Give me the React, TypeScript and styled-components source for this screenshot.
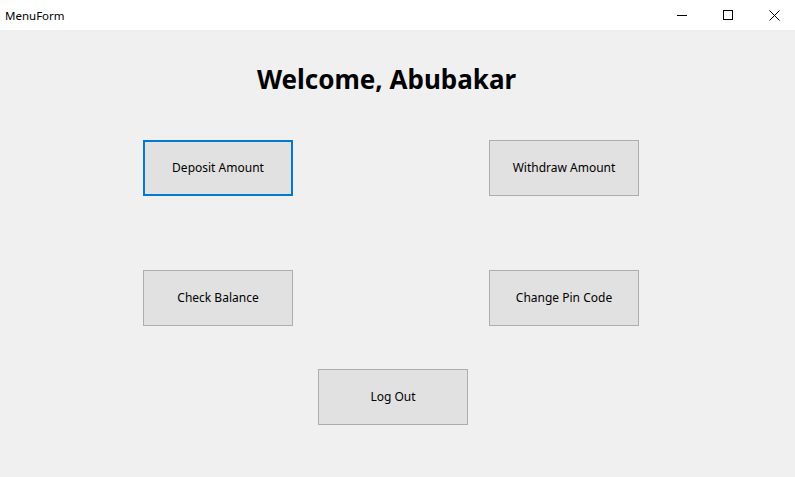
import React from "react";
import styled, { createGlobalStyle } from "styled-components";

const GlobalStyle = createGlobalStyle`
  html, body {
    margin: 0;
    padding: 0;
    background: #f0f0f0;
  }
  body {
    font-family: "Noto Sans", "Open Sans", sans-serif;
  }
`;

const Window = styled.div`
  width: 795px;
  height: 477px;
  display: flex;
  flex-direction: column;
  background: #f0f0f0;
  overflow: hidden;
`;

const TitleBar = styled.div`
  height: 30px;
  display: flex;
  align-items: center;
  background: #ffffff;
  flex-shrink: 0;
  margin-right: -2px;
`;

const Caption = styled.span`
  flex: 1;
  padding-left: 5px;
  font-size: 11.5px;
  color: #000;
`;

const CaptionButton = styled.div`
  width: 46px;
  height: 30px;
  display: flex;
  align-items: center;
  justify-content: center;
`;

const Body = styled.div`
  flex: 1;
  display: flex;
  flex-direction: column;
`;

const Heading = styled.h1`
  margin: 29px 0 0 0;
  font-size: 26px;
  font-weight: 700;
  line-height: 40px;
  text-align: center;
  padding-right: 22px;
  color: #000;
`;

const ButtonGrid = styled.div`
  display: grid;
  grid-template-columns: 150px 150px;
  column-gap: 196px;
  row-gap: 74px;
  padding-left: 143px;
  margin-top: 41px;
`;

const LastRow = styled.div`
  display: flex;
  padding-left: 318px;
  margin-top: 43px;
`;

const FormButton = styled.button<{ $focused?: boolean }>`
  width: 150px;
  height: 56px;
  box-sizing: border-box;
  background: #e1e1e1;
  border: ${(p) => (p.$focused ? "2px solid #0078d7" : "1px solid #adadad")};
  font-family: "Noto Sans", "Open Sans", sans-serif;
  font-size: 12px;
  color: #000;
  padding: 0 0 2px 0;
  cursor: pointer;
`;

export default function App() {
  return (
    <>
      <GlobalStyle />
      <Window>
        <TitleBar>
          <Caption>MenuForm</Caption>
          <CaptionButton>
            <svg width="10" height="10" viewBox="0 0 10 10">
              <line x1="0" y1="5.5" x2="10" y2="5.5" stroke="#000" strokeWidth="1" />
            </svg>
          </CaptionButton>
          <CaptionButton>
            <svg width="10" height="10" viewBox="0 0 10 10">
              <rect x="0.5" y="0.5" width="9" height="9" fill="none" stroke="#000" strokeWidth="1" />
            </svg>
          </CaptionButton>
          <CaptionButton>
            <svg width="11" height="11" viewBox="0 0 11 11">
              <path d="M0.5 0.5 L10.5 10.5 M10.5 0.5 L0.5 10.5" stroke="#000" strokeWidth="1" />
            </svg>
          </CaptionButton>
        </TitleBar>
        <Body>
          <Heading>Welcome, Abubakar</Heading>
          <ButtonGrid>
            <FormButton $focused>Deposit Amount</FormButton>
            <FormButton>Withdraw Amount</FormButton>
            <FormButton>Check Balance</FormButton>
            <FormButton>Change Pin Code</FormButton>
          </ButtonGrid>
          <LastRow>
            <FormButton>Log Out</FormButton>
          </LastRow>
        </Body>
      </Window>
    </>
  );
}
